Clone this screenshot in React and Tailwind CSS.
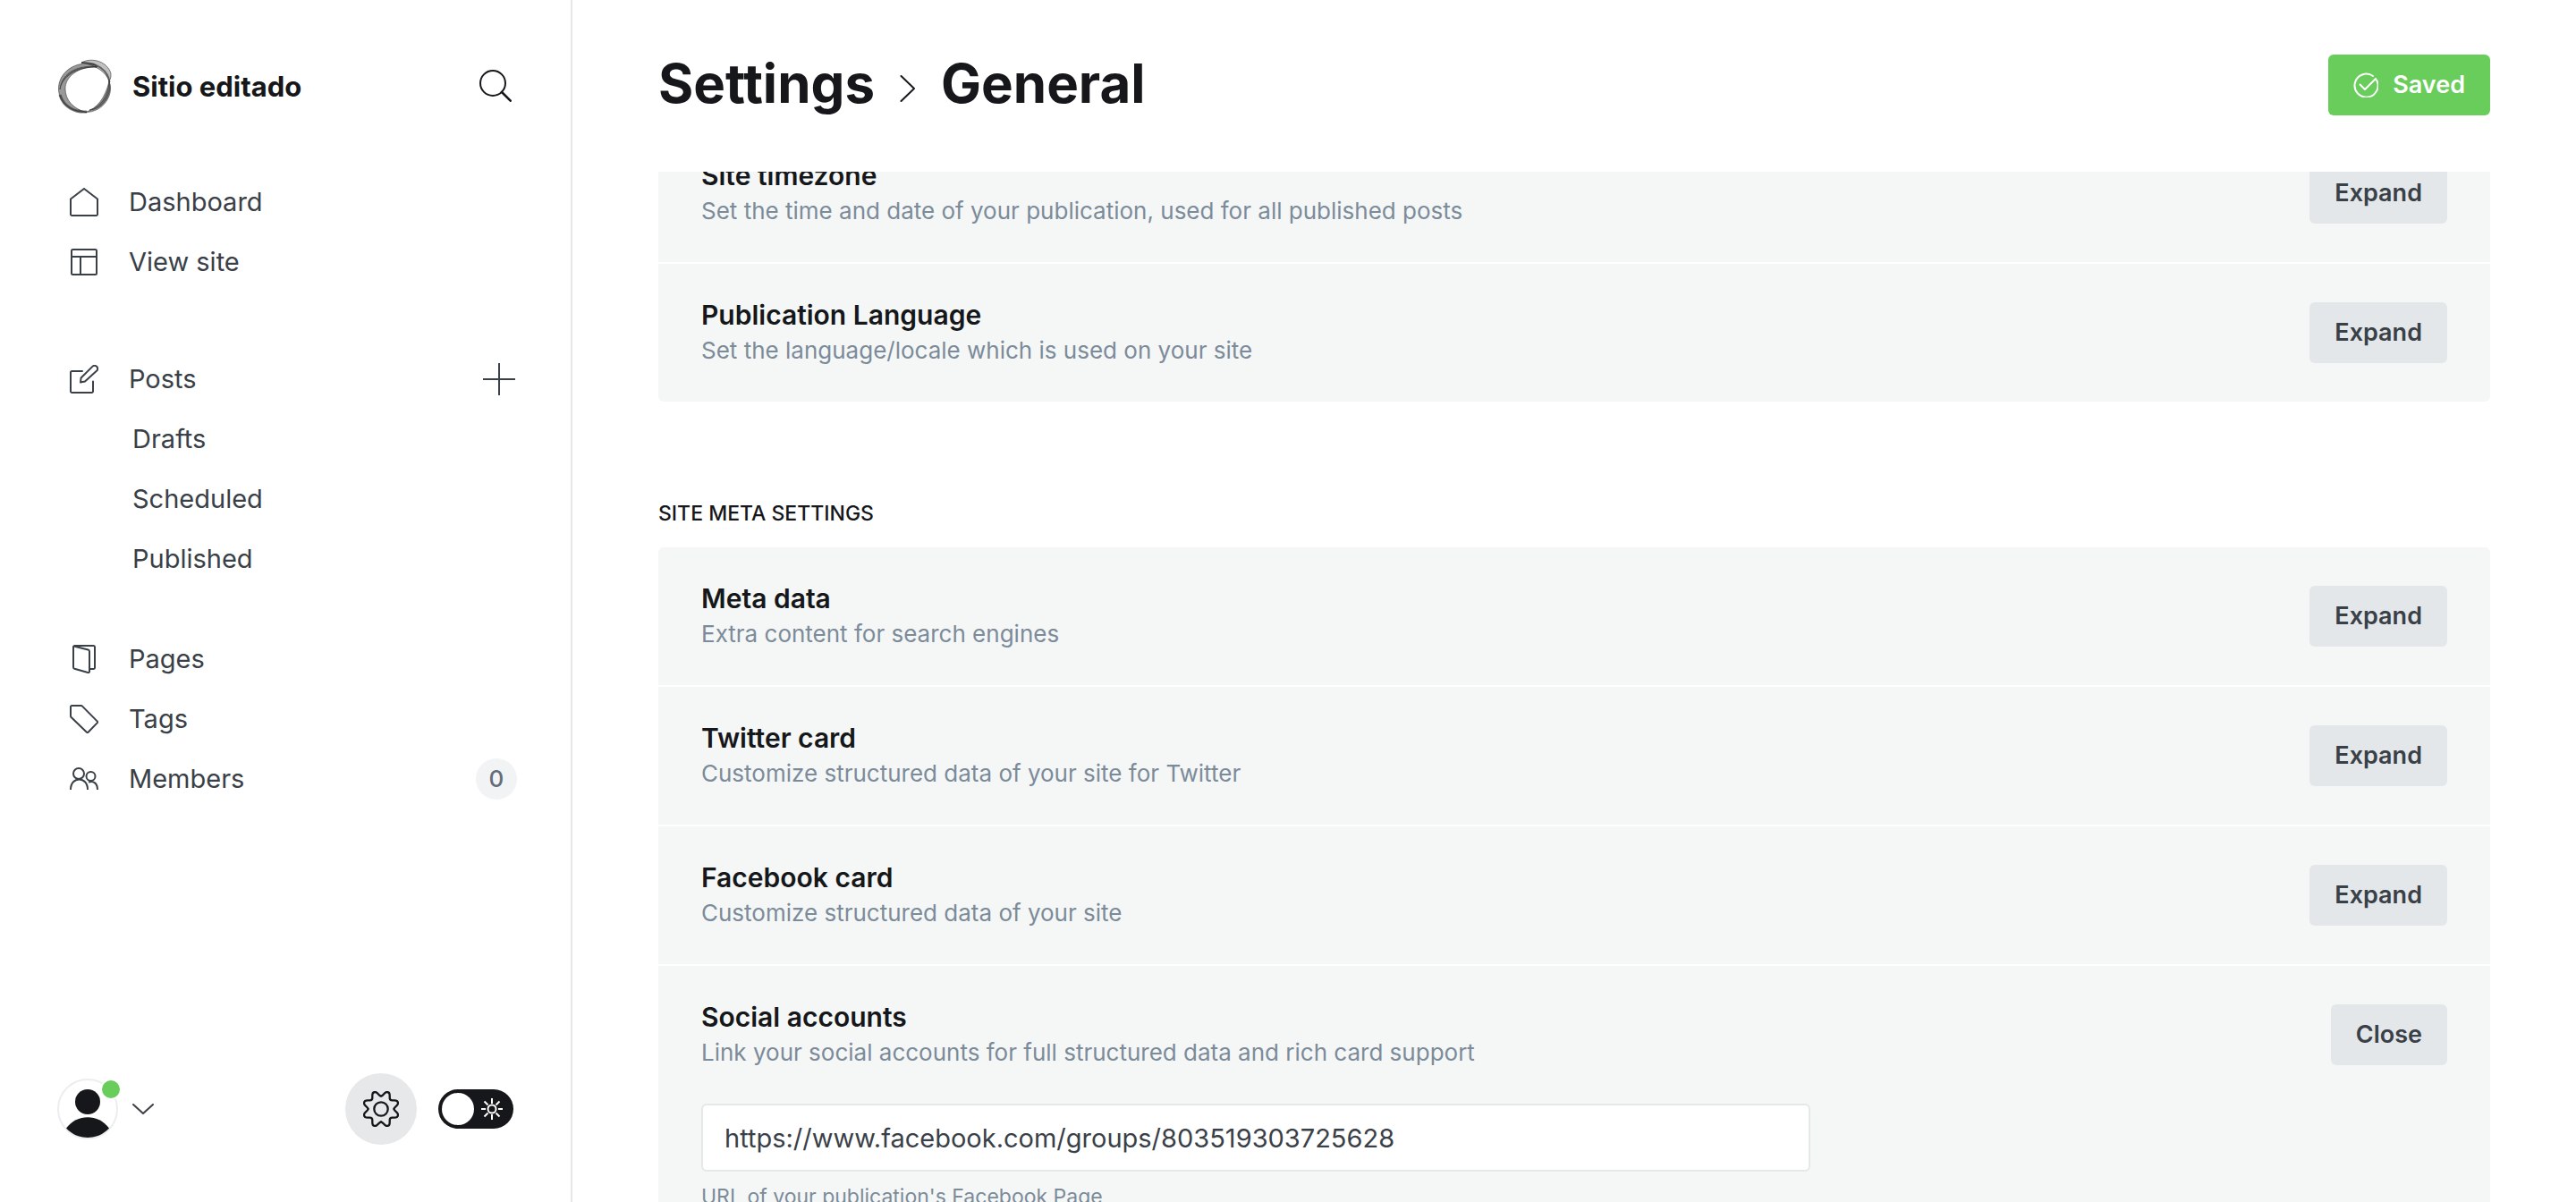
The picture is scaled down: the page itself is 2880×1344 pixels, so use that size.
const ink = "text-[#15171a]";

function Icon({ children, className = "size-8", box = "0 0 32 32", width = 2 }) {
  return (
    <svg
      aria-hidden="true"
      viewBox={box}
      className={`shrink-0 ${className}`}
      fill="none"
      stroke="currentColor"
      strokeWidth={width}
      strokeLinecap="round"
      strokeLinejoin="round"
    >
      {children}
    </svg>
  );
}

const HomeIcon = () => (
  <Icon>
    <path d="M16 1 L31 12.5 V29.5 a1.5 1.5 0 0 1 -1.5 1.5 H2.5 A1.5 1.5 0 0 1 1 29.5 V12.5 Z" />
  </Icon>
);
const LayoutIcon = () => (
  <Icon>
    <rect x="2" y="2" width="28" height="28" rx="1.5" />
    <path d="M2 10 H30 M12 10 V30" />
  </Icon>
);
const PostsIcon = () => (
  <Icon>
    <path d="M14 7 H2.5 A1.5 1.5 0 0 0 1 8.5 V29.5 A1.5 1.5 0 0 0 2.5 31 H24.5 A1.5 1.5 0 0 0 26 29.5 V18.5" />
    <path d="M17 18.5 L12 19.5 L12.6 14.5 L25.3 1.9 A3.3 3.3 0 0 1 30.2 6.6 Z" />
  </Icon>
);
const PagesIcon = () => (
  <Icon>
    <path d="M4.5 1.5 L20.5 5.5 A2 2 0 0 1 22 7.5 V29.5 A1.3 1.3 0 0 1 20.3 31 L5.3 26.8 A2 2 0 0 1 4 25 V2.5 A1.5 1.5 0 0 1 5.5 1 H26.5 A1.5 1.5 0 0 1 28 2.5 V25.5 A1.5 1.5 0 0 1 26.5 27 H22" />
  </Icon>
);
const TagsIcon = () => (
  <Icon>
    <path d="M2.5 1 H12.5 A2 2 0 0 1 14 1.6 L30.6 18.4 A1.5 1.5 0 0 1 30.6 20.4 L20.8 30.5 A1.5 1.5 0 0 1 18.7 30.5 L1.6 14 A2 2 0 0 1 1 12.5 V2.5 A1.5 1.5 0 0 1 2.5 1 Z" />
  </Icon>
);
const MembersIcon = () => (
  <Icon>
    <circle cx="10" cy="10" r="6" />
    <path d="M1 28 C1 12.500 20 12.500 20 28" strokeLinecap="butt" />
    <circle cx="23.500" cy="13" r="5" />
    <path d="M21 19.500 C26.500 17.500 31 21 31 28" strokeLinecap="butt" />
  </Icon>
);

function NavItem({ icon, label, children }) {
  return (
    <li className="flex h-[67px] items-center justify-between pl-[14px]">
      <a href="#" className="flex items-center gap-[34px]">
        {icon}
        {label}
      </a>
      {children}
    </li>
  );
}

function SubItem({ label }) {
  return (
    <li className="flex h-[67px] items-center pl-[84px]">
      <a href="#">{label}</a>
    </li>
  );
}

function Logo() {
  return (
    <svg aria-hidden="true" viewBox="0 0 62 62" className="size-[62px] shrink-0" fill="none" stroke="#222">
      <g fill="#333" fillOpacity="0.5" strokeOpacity="0.5">
        <path d="M42 6 C20 1 1 15 1.500 34 C2 49 15 60 33 59.500 C18 56 9 46 9 33 C9 20 23 8 45 9 Z" />
        <path d="M44 9 C26 6 5 14 3 34 C5 20 22 8 44 9 Z" />
        <path d="M58 25 C64 39 52 60 31 59.500 C45 56 54 42 58 25 Z" />
        <path d="M58 25 C62 40 50 57 36 57 C48 54 57 42 58 25 Z" />
      </g>
      <path
        d="M27 4 C34 0 45 0 53 6 C60 12 62 18 58 25 C55 15 44 7 27 4 Z"
        fill="#333"
        fillOpacity="0.3"
        strokeOpacity="0.55"
      />
      <path d="M27 4 C44 3 57 13 58.500 26" strokeWidth="2" strokeOpacity="0.6" />
      <path d="M3 40 C7 54 20 60 33 59" strokeWidth="3" strokeOpacity="0.6" />
    </svg>
  );
}

const GEAR_QUARTER =
  "M0 -14.500 C2.500 -14.500 3.500 -19 6.500 -19 C9 -19 9.700 -17 9.700 -15 V-12.500 Q9.700 -9.700 12.500 -9.700 H15 C17 -9.700 19 -9 19 -6.500 C19 -3.500 14.500 -2.500 14.500 0";

function Gear() {
  return (
    <Icon className="size-10" box="-20 -20 40 40" width={2.3}>
      <circle r="7.700" />
      <path d={GEAR_QUARTER} />
      <path d={GEAR_QUARTER} transform="rotate(90)" />
      <path d={GEAR_QUARTER} transform="rotate(180)" />
      <path d={GEAR_QUARTER} transform="rotate(270)" />
    </Icon>
  );
}

function Sidebar() {
  return (
    <aside className="flex w-[640px] shrink-0 flex-col border-r-2 border-[#e5e7e9] pr-[60px] pl-16 text-[29px] text-[#394047]">
      <div className={`flex items-center justify-between pt-[66px] ${ink}`}>
        <div className="flex items-center gap-[22px]">
          <Logo />
          <span className="text-[31px] font-bold">Sitio editado</span>
        </div>
        <button type="button" aria-label="Search" className="mr-1.5 mb-0.5">
          <Icon className="size-9" box="0 0 36 36">
            <circle cx="15" cy="15" r="14" />
            <path d="M25 25 L34.700 34.700" strokeWidth="2.600" />
          </Icon>
        </button>
      </div>
      <nav className="flex flex-col pt-16">
        <ul>
          <NavItem icon={<HomeIcon />} label="Dashboard" />
          <NavItem icon={<LayoutIcon />} label="View site" />
        </ul>
        <ul className="pt-16">
          <NavItem icon={<PostsIcon />} label="Posts">
            <button type="button" aria-label="New post" className="mr-0.5">
              <Icon className="size-9" box="0 0 36 36">
                <path d="M18 0 V36 M0 18 H36" strokeLinecap="butt" />
              </Icon>
            </button>
          </NavItem>
          <SubItem label="Drafts" />
          <SubItem label="Scheduled" />
          <SubItem label="Published" />
        </ul>
        <ul className="pt-[45px]">
          <NavItem icon={<PagesIcon />} label="Pages" />
          <NavItem icon={<TagsIcon />} label="Tags" />
          <NavItem icon={<MembersIcon />} label="Members">
            <span className="flex size-[46px] items-center justify-center rounded-full bg-[#f1f3f4] text-[26px] font-medium text-[#626d79]">
              0
            </span>
          </NavItem>
        </ul>
      </nav>
      <div className="mt-auto flex items-center pr-1 pb-16">
        <button type="button" aria-label="Account menu" className="flex items-center gap-4">
          <span className="relative">
            <svg aria-hidden="true" viewBox="0 0 68 68" className="size-[68px]">
              <circle cx="34" cy="34" r="33" fill="#fff" stroke="#ecedee" strokeWidth="2" />
              <circle cx="34" cy="26" r="14" fill="#15171a" />
              <path d="M10 55.500 C22 39 46 39 58 55.500 C45 69.500 23 69.500 10 55.500 Z" fill="#15171a" />
            </svg>
            <span className="absolute top-0 -right-1 size-6 rounded-full border-2 border-white bg-[#69cd5b]" />
          </span>
          <Icon className="h-3 w-6" box="0 0 24 12">
            <path d="M1 1 L12 11 L23 1" />
          </Icon>
        </button>
        <button
          type="button"
          aria-label="Settings"
          className={`ml-auto flex size-20 items-center justify-center rounded-full bg-[#e6e8ea] ${ink}`}
        >
          <Gear />
        </button>
        <button
          type="button"
          role="switch"
          aria-checked="false"
          aria-label="Night shift"
          className="ml-6 flex h-11 w-[84px] items-center gap-2 rounded-full bg-[#15171a] p-1 text-white"
        >
          <span className="size-9 rounded-full bg-white" />
          <Icon className="size-6" box="0 0 24 24">
            <circle cx="12" cy="12" r="4.500" />
            <path
              strokeLinecap="butt"
              d="M12 0 V6 M12 18 V24 M0 12 H5 M19 12 H24 M3.500 3.500 L7.500 7.500 M16.500 16.500 L20.500 20.500 M3.500 20.500 L7.500 16.500 M16.500 7.500 L20.500 3.500"
            />
          </Icon>
        </button>
      </div>
    </aside>
  );
}

function Setting({ title, description, action = "Expand", children }) {
  return (
    <section className="bg-[#f4f7f6] px-12 py-[43px]">
      <div className="flex items-start justify-between">
        <div className="-my-1">
          <h3 className={`text-[30px] leading-9 font-semibold ${ink}`}>{title}</h3>
          <p className="pt-1 text-[26px] leading-9 text-[#7c8b9a]">{description}</p>
        </div>
        <button
          type="button"
          className="h-[68px] rounded-md bg-[#e3e7ea] px-7 text-[27px] font-semibold text-[#394047]"
        >
          {action}
        </button>
      </div>
      {children}
    </section>
  );
}

export default function App() {
  return (
    <div className="flex h-screen overflow-hidden bg-white font-['Inter',sans-serif]">
      <Sidebar />
      <main className="flex min-w-0 grow flex-col px-24">
        <header className="flex h-48 shrink-0 items-start justify-between pt-[61px]">
          <h1 className={`-mt-1 flex items-center text-[60px] leading-[72px] font-bold ${ink}`}>
            <a href="#">Settings</a>
            <Icon className="mx-7 mt-3 h-8 w-[18px]" box="0 0 18 32">
              <path d="M1.500 2 L16 16 L1.500 30" />
            </Icon>
            General
          </h1>
          <button
            type="button"
            className="flex h-[68px] items-center gap-4 rounded-md bg-[#69cd5b] px-7 text-[27px] font-semibold text-white"
          >
            <Icon className="size-7" box="0 0 28 28">
              <path d="M22 4 A13 13 0 1 0 26 8.500" />
              <path d="M7.500 13.500 L13 19 L25 7" />
            </Icon>
            Saved
          </button>
        </header>
        <div className="min-h-0 grow overflow-hidden">
          <div className="-mt-[53px] flex flex-col gap-0.5 overflow-hidden rounded-md">
            <Setting
              title="Site timezone"
              description="Set the time and date of your publication, used for all published posts"
            />
            <Setting title="Publication Language" description="Set the language/locale which is used on your site" />
          </div>
          <h2 className={`pt-[109px] pb-[22px] text-[23px] leading-8 font-medium uppercase ${ink}`}>
            Site meta settings
          </h2>
          <div className="flex flex-col gap-0.5 overflow-hidden rounded-md">
            <Setting title="Meta data" description="Extra content for search engines" />
            <Setting title="Twitter card" description="Customize structured data of your site for Twitter" />
            <Setting title="Facebook card" description="Customize structured data of your site" />
            <Setting
              title="Social accounts"
              description="Link your social accounts for full structured data and rich card support"
              action="Close"
            >
              <div className="flex max-w-[1240px] flex-col gap-3 pt-[43px]">
                <input
                  type="url"
                  id="facebook-url"
                  defaultValue="https://www.facebook.com/groups/803519303725628"
                  className="h-[76px] rounded-md border-2 border-[#e5e8e8] bg-white px-6 text-[29px] text-[#394047]"
                />
                <label htmlFor="facebook-url" className="text-[23px] leading-8 text-[#7c8b9a]">
                  URL of your publication's Facebook Page
                </label>
              </div>
            </Setting>
          </div>
        </div>
      </main>
    </div>
  );
}
